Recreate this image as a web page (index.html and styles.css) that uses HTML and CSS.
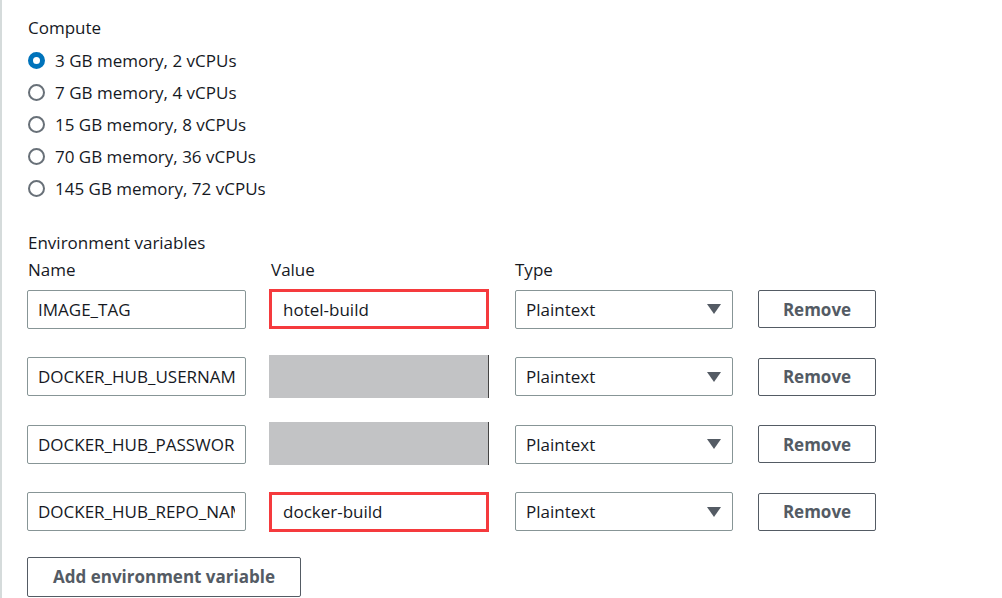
FILE: index.html
```html
<!DOCTYPE html>
<html>
<head>
<meta charset="utf-8">
<link rel="stylesheet" href="styles.css">
</head>
<body>
<div class="page">
  <section class="compute">
    <div class="label">Compute</div>
    <ul class="radios">
      <li class="radio checked"><span class="dot"></span>3 GB memory, 2 vCPUs</li>
      <li class="radio"><span class="dot"></span>7 GB memory, 4 vCPUs</li>
      <li class="radio"><span class="dot"></span>15 GB memory, 8 vCPUs</li>
      <li class="radio"><span class="dot"></span>70 GB memory, 36 vCPUs</li>
      <li class="radio"><span class="dot"></span>145 GB memory, 72 vCPUs</li>
    </ul>
  </section>
  <section class="env">
    <div class="label">Environment variables</div>
    <div class="heads">
      <div class="head">Name</div>
      <div class="head">Value</div>
      <div class="head">Type</div>
      <div class="head"></div>
    </div>
    <div class="grid">
      <input class="input" type="text" value="IMAGE_TAG" readonly>
      <input class="input hl" type="text" value="hotel-build" readonly>
      <div class="select">Plaintext<span class="caret"></span></div>
      <button class="btn rm">Remove</button>

      <input class="input" type="text" value="DOCKER_HUB_USERNAME" readonly>
      <div class="mask"></div>
      <div class="select">Plaintext<span class="caret"></span></div>
      <button class="btn rm">Remove</button>

      <input class="input" type="text" value="DOCKER_HUB_PASSWORD" readonly>
      <div class="mask"></div>
      <div class="select">Plaintext<span class="caret"></span></div>
      <button class="btn rm">Remove</button>

      <input class="input" type="text" value="DOCKER_HUB_REPO_NAME" readonly>
      <input class="input hl" type="text" value="docker-build" readonly>
      <div class="select">Plaintext<span class="caret"></span></div>
      <button class="btn rm">Remove</button>
    </div>
    <button class="btn add">Add environment variable</button>
  </section>
</div>
</body>
</html>
```
FILE: styles.css
```css
* { box-sizing: border-box; }
html, body { margin: 0; padding: 0; background: #fff; }
body {
  font-family: "Open Sans", "Noto Sans", Arial, sans-serif;
  font-size: 17px;
  color: #16191f;
  width: 1002px;
  height: 598px;
  overflow: hidden;
}
.page {
  border-left: 2px solid #d5dbdb;
  height: 598px;
  padding: 16px 0 0 25px;
}
.label { line-height: 24px; padding-left: 1px; }
.radios { list-style: none; margin: 4px 0 0; padding: 0 0 0 1px; }
.radio {
  display: flex;
  align-items: center;
  height: 32px;
  gap: 10px;
}
.dot {
  width: 17px; height: 17px;
  border-radius: 50%;
  border: 2px solid #687078;
  background: #fff;
  flex: none;
}
.checked .dot { border: 5px solid #0073bb; }
.env { margin-top: 27px; }
.heads, .grid {
  display: grid;
  grid-template-columns: 219px 222px 219px 118px;
  column-gap: 23px 24px;
  column-gap: 0;
}
.heads > :nth-child(4n+1), .grid > :nth-child(4n+1) { margin-right: 23px; }
.heads > :nth-child(4n+2), .grid > :nth-child(4n+2) { margin-right: 24px; }
.heads > :nth-child(4n+3), .grid > :nth-child(4n+3) { margin-right: 24px; }
.heads, .grid { grid-template-columns: 242px 246px 243px 118px; }
.heads { margin-top: 3px; }
.head { line-height: 24px; }
.head:first-child { padding-left: 1px; }
.head:nth-child(2) { padding-left: 2px; }
.grid {
  margin-top: 7px;
  grid-auto-rows: 40px;
  row-gap: 27.5px;
  align-items: center;
}
.input {
  font-family: inherit;
  font-size: 17px;
  color: #16191f;
  height: 39px;
  width: 219px;
  border: 1px solid #879596;
  border-radius: 2px;
  padding: 0 10px;
  background: #fff;
  outline: none;
}
.input.hl {
  width: 220px;
  height: 40px;
  border: 3px solid #f53a3d;
  border-radius: 0;
  padding: 0 11px;
}
.mask {
  width: 220px;
  height: 43px;
  margin-top: -2px;
  margin-bottom: -1px;
  background: #c2c3c5;
  border-right: 1px solid #444;
}
.select {
  width: 218px;
  height: 39px;
  border: 1px solid #879596;
  border-radius: 2px;
  padding: 0 10px;
  display: flex;
  justify-content: space-between;
  align-items: center;
}
.caret {
  width: 0; height: 0;
  border-left: 7px solid transparent;
  border-right: 7px solid transparent;
  border-top: 10px solid #545b64;
  margin-right: 1px;
}
.btn {
  font-family: inherit;
  font-size: 17px;
  font-weight: 700;
  color: #545b64;
  background: #fff;
  border: 1px solid #545b64;
  border-radius: 2px;
  height: 38px;
  padding: 0 20px;
  margin: 0;
}
.rm { width: 118px; }
.add { margin-top: 25px; height: 40px; width: 274px; }
```
